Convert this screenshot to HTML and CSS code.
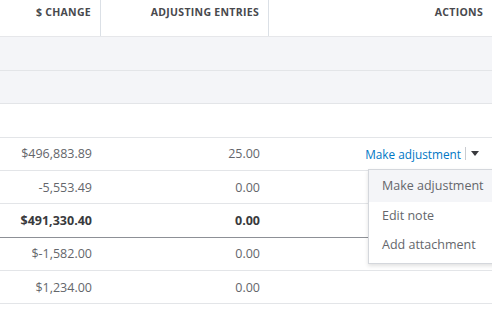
FILE: index.html
```
<!DOCTYPE html>
<html lang="en">
<head>
  <meta charset="UTF-8" />
  <title>Reconcile adjustments</title>
  <link rel="stylesheet" href="styles.css">
</head>
<body>
  <div class="grid">
    <div class="row head">
      <div class="cell">$ CHANGE</div>
      <div class="cell">ADJUSTING ENTRIES</div>
      <div class="cell">ACTIONS</div>
    </div>
    <div class="row shade"><div class="cell"></div><div class="cell"></div><div class="cell"></div></div>
    <div class="row shade"><div class="cell"></div><div class="cell"></div><div class="cell"></div></div>
    <div class="row"><div class="cell"></div><div class="cell"></div><div class="cell"></div></div>
    <div class="row">
      <div class="cell">$496,883.89</div>
      <div class="cell">25.00</div>
      <div class="cell action">
        <a class="link" href="#">Make adjustment</a>
        <span class="sep"></span>
        <span class="caret"></span>
        <ul class="menu">
          <li class="active">Make adjustment</li>
          <li>Edit note</li>
          <li>Add attachment</li>
        </ul>
      </div>
    </div>
    <div class="row">
      <div class="cell">-5,553.49</div>
      <div class="cell">0.00</div>
      <div class="cell"></div>
    </div>
    <div class="row total">
      <div class="cell">$491,330.40</div>
      <div class="cell">0.00</div>
      <div class="cell"></div>
    </div>
    <div class="row">
      <div class="cell">$-1,582.00</div>
      <div class="cell">0.00</div>
      <div class="cell"></div>
    </div>
    <div class="row">
      <div class="cell">$1,234.00</div>
      <div class="cell">0.00</div>
      <div class="cell"></div>
    </div>
  </div>
</body>
</html>
```
FILE: styles.css
```
body {
  margin: 0;
  font-family: "Open Sans", Arial, sans-serif;
  color: #64666b;
  background: #fff;
  overflow: hidden;
}
.grid {
  width: 492px;
}
.row {
  display: grid;
  grid-template-columns: 101px 168px 1fr;
  height: 33.375px;
  box-sizing: border-box;
  border-bottom: 1px solid #e3e5e8;
}
.cell {
  display: flex;
  align-items: center;
  justify-content: flex-end;
  padding-right: 9px;
  font-size: 12.5px;
}
.head {
  height: 37.4px;
  border-bottom-color: #e6e7ea;
}
.head .cell {
  align-items: flex-start;
  padding-top: 5px;
  font-size: 10.5px;
  font-weight: 700;
  color: #48494d;
  letter-spacing: 0.3px;
}
.head .cell:nth-child(1),
.head .cell:nth-child(2) {
  border-right: 1px solid #dbe0e6;
}
.shade {
  background: #f4f5f8;
}
.total {
  border-bottom-color: #8d9096;
}
.total .cell {
  font-weight: 700;
  color: #393a3d;
}
.action {
  position: relative;
  padding-right: 13px;
}
.link {
  color: #0077c5;
  font-size: 11.8px;
  text-decoration: none;
}
.sep {
  width: 1px;
  height: 13px;
  background: #c9ccd1;
  margin: 0 5px 0 4px;
}
.caret {
  width: 0;
  height: 0;
  border-left: 4px solid transparent;
  border-right: 4px solid transparent;
  border-top: 5px solid #393a3d;
}
.menu {
  position: absolute;
  top: 31px;
  left: 99px;
  width: 150px;
  margin: 0;
  padding: 0 0 3px;
  list-style: none;
  background: #fff;
  border: 1px solid #d4d7dc;
  box-shadow: 0 2px 4px rgba(0, 0, 0, 0.12);
  z-index: 2;
}
.menu li {
  height: 29px;
  line-height: 27px;
  padding-left: 13px;
  font-size: 12.5px;
  color: #64666b;
}
.menu li.active {
  height: 32px;
  line-height: 32px;
  background: #f4f5f8;
}
```
